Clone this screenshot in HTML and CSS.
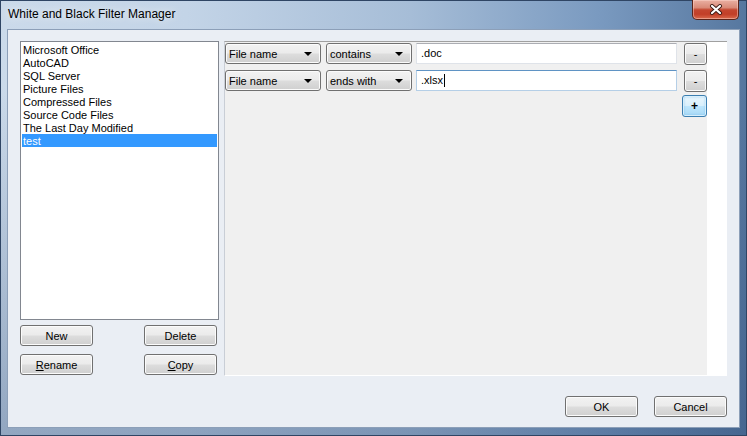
FILE: index.html
```html
<!DOCTYPE html>
<html>
<head>
<meta charset="utf-8">
<link rel="stylesheet" href="styles.css">
</head>
<body>
<div class="window">
  <div class="titlebar">
    <div class="title">White and Black Filter Manager</div>
    <div class="close">
      <svg width="14" height="11" viewBox="0 0 14 11">
        <path d="M3 2 L11 9 M11 2 L3 9" stroke="#3b1a14" stroke-width="4" stroke-linecap="round"/>
        <path d="M3 2 L11 9 M11 2 L3 9" stroke="#ffffff" stroke-width="2.2" stroke-linecap="round"/>
      </svg>
    </div>
  </div>
  <div class="client">
    <div class="main">
      <div class="leftcol">
        <div class="listbox">
          <div class="item">Microsoft Office</div>
          <div class="item">AutoCAD</div>
          <div class="item">SQL Server</div>
          <div class="item">Picture Files</div>
          <div class="item">Compressed Files</div>
          <div class="item">Source Code Files</div>
          <div class="item">The Last Day Modified</div>
          <div class="item selected">test</div>
        </div>
        <div class="btnrow">
          <button class="btn small">New</button>
          <button class="btn small">Delete</button>
        </div>
        <div class="btnrow second">
          <button class="btn small"><u>R</u>ename</button>
          <button class="btn small"><u>C</u>opy</button>
        </div>
      </div>
      <div class="panel">
        <div class="rules">
          <div class="rule">
            <div class="combo c1"><span>File name</span><i class="arrow"></i></div>
            <div class="combo c2"><span>contains</span><i class="arrow"></i></div>
            <div class="input">.doc</div>
            <button class="btn mini">-</button>
          </div>
          <div class="rule">
            <div class="combo c1"><span>File name</span><i class="arrow"></i></div>
            <div class="combo c2"><span>ends with</span><i class="arrow"></i></div>
            <div class="input focused">.xlsx<span class="caret"></span></div>
            <button class="btn mini">-</button>
          </div>
          <div class="addrow">
            <button class="btn plus">+</button>
          </div>
        </div>
        <div class="strip"></div>
      </div>
    </div>
    <div class="footer">
      <button class="btn small">OK</button>
      <button class="btn small">Cancel</button>
    </div>
  </div>
</div>
</body>
</html>
```
FILE: styles.css
```css
html, body {
  margin: 0;
  padding: 0;
  overflow: hidden;
  background: #ffffff;
}

.window {
  width: 747px;
  height: 436px;
  box-sizing: border-box;
  display: flex;
  flex-direction: column;
  background:
    linear-gradient(to bottom, rgba(255,255,255,0) 0%, rgba(255,255,255,0) 20%, rgba(40,70,115,0.35) 100%),
    linear-gradient(to right, #cbdaea 0%, #c3d4e7 25%, #a6bdd7 55%, #7a9ac0 80%, #56779f 100%);
  box-shadow: inset 0 0 0 1px #2f4564;
  font-family: "Liberation Sans", Arial, sans-serif;
  font-size: 11px;
  color: #000;
}

.titlebar {
  height: 29px;
  display: flex;
  align-items: flex-start;
  justify-content: space-between;
  flex-shrink: 0;
}

.title {
  font-size: 12px;
  line-height: 29px;
  padding-left: 8px;
  color: #000;
  text-shadow: 0 0 8px rgba(255,255,255,0.9);
}

.close {
  width: 45px;
  height: 19px;
  margin-right: 8px;
  border: 1px solid #5a241a;
  border-top: none;
  border-radius: 0 0 5px 5px;
  background: linear-gradient(to bottom, #eab0a2 0%, #d98a78 40%, #c4462f 52%, #c23f28 75%, #d96a4c 100%);
  box-shadow: inset 0 0 0 1px rgba(255,220,210,0.45);
  display: flex;
  align-items: center;
  justify-content: center;
}

.client {
  flex: 1;
  margin: 0 7px 8px 7px;
  border: 1px solid #8c9fb8;
  background: #eaeef4;
  padding: 11px 12px 10px 12px;
  display: flex;
  flex-direction: column;
}

.main {
  display: flex;
  gap: 5px;
  height: 335px;
}

.leftcol {
  width: 199px;
  display: flex;
  flex-direction: column;
}

.listbox {
  height: 279px;
  box-sizing: border-box;
  border: 1px solid #828790;
  background: #ffffff;
  padding: 1px 1px 0 1px;
}

.item {
  height: 13px;
  line-height: 14px;
  padding-left: 1px;
  white-space: nowrap;
}

.item.selected {
  background: #3399ff;
  color: #ffffff;
}

.btnrow {
  display: flex;
  justify-content: space-between;
  margin-top: 5px;
  padding-right: 2px;
}

.btnrow.second {
  margin-top: 8px;
}

.btn {
  font-family: "Liberation Sans", Arial, sans-serif;
  font-size: 11px;
  color: #000;
  box-sizing: border-box;
  border: 1px solid #707070;
  border-radius: 3px;
  background: linear-gradient(to bottom, #f2f2f2 0%, #ebebeb 48%, #dddddd 52%, #cfcfcf 100%);
  box-shadow: inset 0 0 0 1px #fbfbfb;
  padding: 0;
  margin: 0;
  display: flex;
  align-items: center;
  justify-content: center;
}

.btn.small {
  width: 73px;
  height: 21px;
}

.btn u {
  text-decoration: underline;
}

.panel {
  width: 503px;
  box-sizing: border-box;
  border-top: 1px solid #a0a0a0;
  border-left: 1px solid #c9ced6;
  border-bottom: 1px solid #ffffff;
  display: flex;
}

.rules {
  width: 482px;
  background: #f0f0f0;
  padding-top: 1px;
  display: flex;
  flex-direction: column;
}

.strip {
  flex: 1;
  background: #ffffff;
}

.rule {
  display: flex;
  align-items: flex-start;
  height: 22px;
  margin-bottom: 5px;
}

.combo {
  height: 21px;
  box-sizing: border-box;
  border: 1px solid #707070;
  border-radius: 3px;
  background: linear-gradient(to bottom, #f2f2f2 0%, #ebebeb 48%, #dddddd 52%, #cfcfcf 100%);
  box-shadow: inset 0 0 0 1px #fbfbfb;
  display: flex;
  align-items: center;
  justify-content: space-between;
  padding: 0 8px 0 3px;
  margin-right: 5px;
}

.combo.c1 {
  width: 96px;
  margin-right: 5px;
}

.combo.c2 {
  width: 86px;
  margin-right: 4px;
}

.arrow {
  width: 0;
  height: 0;
  border-left: 4px solid transparent;
  border-right: 4px solid transparent;
  border-top: 4px solid #000000;
}

.input {
  width: 261px;
  height: 21px;
  box-sizing: border-box;
  background: #ffffff;
  border: 1px solid #dfe3e9;
  border-top-color: #abadb3;
  padding-left: 4px;
  line-height: 19px;
  margin-right: 6px;
  display: flex;
  align-items: center;
}

.input.focused {
  border-color: #b5cfe7;
  border-top-color: #5f93c4;
}

.caret {
  display: inline-block;
  width: 1px;
  height: 13px;
  background: #000;
  margin-left: 1px;
}

.btn.mini {
  width: 23px;
  height: 22px;
  margin-left: 1px;
}

.addrow {
  display: flex;
  justify-content: flex-end;
  margin-top: -2px;
}

.btn.plus {
  width: 25px;
  height: 22px;
  font-weight: bold;
  font-size: 12px;
  border-color: #3c7fb1;
  background: linear-gradient(to bottom, #eaf6fd 0%, #d9f0fc 48%, #bee6fd 52%, #a7d9f5 100%);
  box-shadow: inset 0 0 0 1px #d7eefb, inset 0 0 2px 1px rgba(90,180,240,0.5);
}

.footer {
  margin-top: 20px;
  display: flex;
  justify-content: flex-end;
  gap: 16px;
}
```
